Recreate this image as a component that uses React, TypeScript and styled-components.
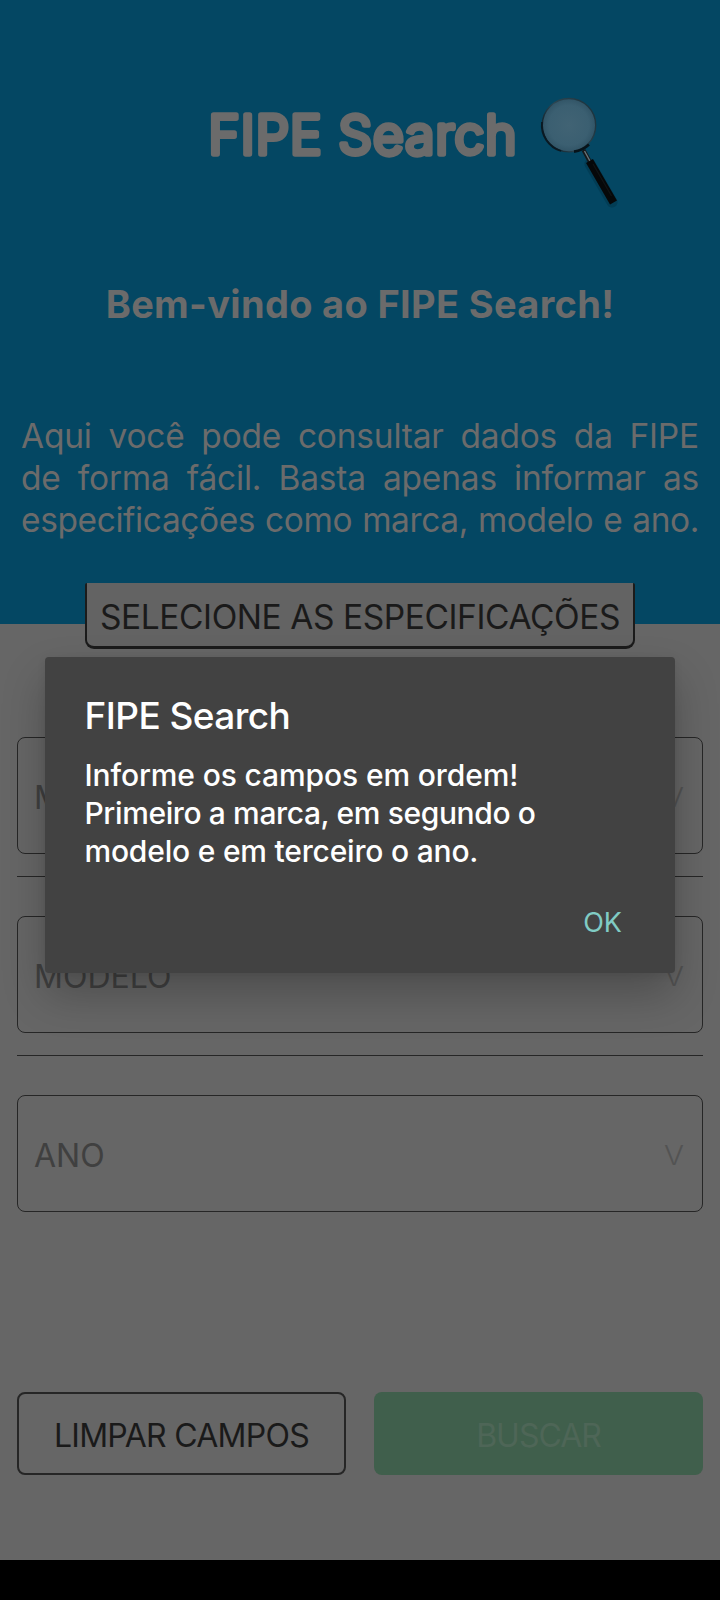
import React from 'react';
import styled, { createGlobalStyle } from 'styled-components';

const GlobalStyle = createGlobalStyle`
  *, *::before, *::after { box-sizing: border-box; }
  body {
    margin: 0;
    background: #666666;
    font-family: Inter, "Liberation Sans", sans-serif;
  }
`;

const Screen = styled.main`
  position: relative;
  display: flex;
  flex-direction: column;
  width: 720px;
  height: 1600px;
  overflow: hidden;
  background: #666666;
`;

const Header = styled.header`
  display: flex;
  flex-direction: column;
  flex: none;
  height: 624px;
  padding: 90px 21px 0 21px;
  background: #044763;
  color: #6b6b6b;
`;

const Brand = styled.div`
  display: flex;
  align-items: flex-start;
  gap: 18px;
  height: 120px;
  padding-left: 183px;

  svg {
    flex: none;
    overflow: visible;
  }
`;

const Welcome = styled.h1`
  margin: 70px 0 0;
  height: 48px;
  font-size: 38px;
  font-weight: 700;
  line-height: 48px;
  letter-spacing: 0.32px;
  text-align: center;
  white-space: nowrap;
`;

const Intro = styled.p`
  margin: 87px 0 0;
  font-size: 33.5px;
  line-height: 42px;
`;

const IntroLine = styled.span<{ $spacing: number }>`
  display: block;
  letter-spacing: ${(p) => p.$spacing}px;
  text-align: justify;
  text-align-last: justify;
  white-space: nowrap;
`;

const SectionLabel = styled.h2`
  flex: none;
  align-self: center;
  width: 550px;
  height: 66px;
  margin: -41px 0 88px;
  border: solid #1b1b1b;
  border-width: 0 2px 3px;
  border-radius: 2px 2px 9px 9px;
  background: #636363;
  color: #1a1a1a;
  font-size: 33.5px;
  font-weight: 400;
  line-height: 69px;
  letter-spacing: -0.43px;
  text-align: center;
  white-space: nowrap;
`;

const Fields = styled.section`
  display: flex;
  flex-direction: column;
  flex: none;
  padding: 0 17px;
`;

const Field = styled.div`
  display: flex;
  align-items: center;
  justify-content: space-between;
  height: 116.5px;
  padding: 4px 19px 0 16px;
  border: 1.5px solid #262626;
  border-radius: 8px;
  color: #404040;
  font-size: 32px;
`;

const Caret = styled.span`
  color: #535353;
  font-size: 27px;
  font-weight: 300;
  transform: scaleX(1.1);
`;

const Divider = styled.hr`
  flex: none;
  height: 1px;
  margin: 22.5px 0 39px;
  border: 0;
  background: #262626;
`;

const Actions = styled.div`
  display: grid;
  grid-template-columns: 1fr 1fr;
  gap: 28px;
  height: 83px;
  margin: 180.5px 17px 0;
`;

const Button = styled.button<{ $filled?: boolean }>`
  padding: 3px 0 0;
  border: ${(p) => (p.$filled ? '0' : '2px solid #262626')};
  border-radius: 8px;
  background: ${(p) => (p.$filled ? '#405f4c' : 'transparent')};
  color: ${(p) => (p.$filled ? '#4e6657' : '#1a1a1a')};
  font: 400 32px Inter, "Liberation Sans", sans-serif;
  letter-spacing: ${(p) => (p.$filled ? -1 : -0.72)}px;
`;

const SystemBar = styled.footer`
  height: 40px;
  margin-top: auto;
  background: #000;
`;

const Dialog = styled.section`
  position: absolute;
  top: 657px;
  left: 45px;
  display: flex;
  flex-direction: column;
  width: 630px;
  height: 316px;
  padding: 35px 39px 0 39.5px;
  border-radius: 4px;
  background: #424242;
  box-shadow: 0 22px 44px rgba(0, 0, 0, 0.24), 0 2px 8px rgba(0, 0, 0, 0.08);
  color: #fff;
`;

const DialogTitle = styled.h3`
  margin: 0;
  font-size: 37px;
  font-weight: 450;
  line-height: 48px;
  letter-spacing: -0.58px;
`;

const DialogText = styled.p`
  margin: 16px 0 0;
  font-size: 30px;
  font-weight: 450;
  line-height: 38px;
`;

const DialogLine = styled.span<{ $spacing: number }>`
  display: block;
  letter-spacing: ${(p) => p.$spacing}px;
  white-space: nowrap;
`;

const DialogAction = styled.button`
  align-self: flex-end;
  margin: 34px 14px 0 0;
  padding: 0;
  border: 0;
  background: transparent;
  color: #80cbc4;
  font: 400 27px/38px Inter, "Liberation Sans", sans-serif;
`;

const Wordmark = () => (
  <svg width="316" height="90" viewBox="204 90 316 90" aria-label="FIPE Search">
    <text
      x="208.5"
      y="154"
      textLength="308"
      lengthAdjust="spacing"
      fontFamily="Inter, sans-serif"
      fontWeight="300"
      fontSize="53"
      fill="#6b6b6b"
      stroke="#6b6b6b"
      strokeWidth="5.4"
      strokeLinejoin="round"
    >
      FIPE Search
    </text>
  </svg>
);

const MagnifyingGlass = () => (
  <svg width="86" height="120" viewBox="538 90 86 120" aria-hidden="true">
    <defs>
      <radialGradient id="lens">
        <stop offset="0" stopColor="#416374" />
        <stop offset="0.75" stopColor="#3b5f71" />
        <stop offset="1" stopColor="#315466" />
      </radialGradient>
      <linearGradient id="rim" x1="0" y1="0.7" x2="1" y2="0.2">
        <stop offset="0" stopColor="#0b1c25" />
        <stop offset="0.4" stopColor="#2d4652" />
        <stop offset="1" stopColor="#1d323c" />
      </linearGradient>
    </defs>
    <path d="M590 164 L612 202" stroke="#02374d" strokeWidth="11" strokeLinecap="round" opacity="0.6" />
    <path d="M583.5 150 L590 162" stroke="#15191b" strokeWidth="4" />
    <path d="M584.5 151 L590.5 162" stroke="#68757a" strokeWidth="1.4" />
    <circle cx="569" cy="125.2" r="26.7" fill="url(#lens)" stroke="url(#rim)" strokeWidth="1.4" />
    <path d="M542 122 A27 27 0 0 0 561 151" fill="none" stroke="#0a1922" strokeWidth="1.8" />
    <path d="M574 151.6 A27 27 0 0 0 589 144.5" fill="none" stroke="#07131a" strokeWidth="2.6" />
    <path d="M591.5 164.5 L611.5 199" stroke="#060809" strokeWidth="8" strokeLinecap="square" />
    <path d="M593 164 L611.5 196" stroke="#111415" strokeWidth="1.2" />
  </svg>
);

export default function App() {
  return (
    <>
      <GlobalStyle />
      <Screen>
        <Header>
          <Brand>
            <Wordmark />
            <MagnifyingGlass />
          </Brand>
          <Welcome>Bem-vindo ao FIPE Search!</Welcome>
          <Intro>
            <IntroLine $spacing={-0.2}>Aqui você pode consultar dados da FIPE</IntroLine>
            <IntroLine $spacing={-0.2}>de forma fácil. Basta apenas informar as</IntroLine>
            <IntroLine $spacing={-0.4}>especificações como marca, modelo e ano.</IntroLine>
          </Intro>
        </Header>
        <SectionLabel>SELECIONE AS ESPECIFICAÇÕES</SectionLabel>
        <Fields>
          <Field>
            MARCA <Caret>V</Caret>
          </Field>
          <Divider />
          <Field>
            MODELO <Caret>V</Caret>
          </Field>
          <Divider />
          <Field>
            ANO <Caret>V</Caret>
          </Field>
        </Fields>
        <Actions>
          <Button>LIMPAR CAMPOS</Button>
          <Button $filled>BUSCAR</Button>
        </Actions>
        <SystemBar />
        <Dialog role="dialog">
          <DialogTitle>FIPE Search</DialogTitle>
          <DialogText>
            <DialogLine $spacing={-0.12}>Informe os campos em ordem!</DialogLine>
            <DialogLine $spacing={-0.38}>Primeiro a marca, em segundo o</DialogLine>
            <DialogLine $spacing={-0.2}>modelo e em terceiro o ano.</DialogLine>
          </DialogText>
          <DialogAction>OK</DialogAction>
        </Dialog>
      </Screen>
    </>
  );
}
